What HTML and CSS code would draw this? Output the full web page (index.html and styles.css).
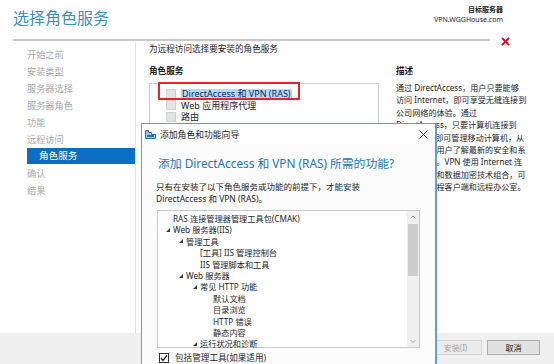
FILE: index.html
```html
<!DOCTYPE html>
<html lang="zh-CN">
<head>
  <meta charset="UTF-8">
  <title>添加角色和功能向导</title>
  <link rel="stylesheet" href="styles.css">
</head>
<body>

<div class="wizard">
  <div class="head">
    <h1>选择角色服务</h1>
    <div class="target">
      <b>目标服务器</b>
      <span>VPN.WGGHouse.com</span>
    </div>
  </div>

  <div class="rule-row">
    <div class="rule"></div>
    <svg class="red-x" width="9" height="9" viewBox="0 0 9 9">
      <path d="M1 1 L8 8 M8 1 L1 8" stroke="#e81123" stroke-width="2"/>
    </svg>
  </div>

  <div class="main">
    <nav class="steps">
      <div class="step">开始之前</div>
      <div class="step">安装类型</div>
      <div class="step">服务器选择</div>
      <div class="step">服务器角色</div>
      <div class="step">功能</div>
      <div class="step">远程访问</div>
      <div class="step current">角色服务</div>
      <div class="step">确认</div>
      <div class="step">结果</div>
    </nav>

    <section class="content">
      <p class="intro">为远程访问选择要安装的角色服务</p>
      <div class="cols">
        <div class="roles">
          <h3>角色服务</h3>
          <div class="role-list">
            <div class="role marked"><span class="box"></span><span class="sel">DirectAccess 和 VPN (RAS)</span></div>
            <div class="role"><span class="box"></span>Web 应用程序代理</div>
            <div class="role"><span class="box"></span>路由</div>
          </div>
        </div>
        <div class="desc">
          <h3>描述</h3>
          <p>
            通过 DirectAccess，用户只要能够<br>
            访问 Internet，即可享受无缝连接到<br>
            公司网络的体验。通过<br>
            DirectAccess，只要计算机连接到<br>
            Internet，即可管理移动计算机，从<br>
            而使得移动用户了解最新的安全和系<br>
            统更新策略。VPN 使用 Internet 连<br>
            接以及隧道和数据加密技术组合，可<br>
            以便连接远程客户端和远程办公室。
          </p>
        </div>
      </div>
    </section>
  </div>

  <div class="foot">
    <button class="btn" disabled>安装(I)</button>
    <button class="btn">取消</button>
  </div>
</div>

<div class="dialog">
  <div class="dlg-title">
    <svg class="dlg-icon" width="11" height="10" viewBox="0 0 11 10">
      <path d="M0.5 9.5 V1.5 H3.5 V3.5 H6.5 V5.5 H10.5 V9.5 Z" fill="#9cc7ea" stroke="#2c6fb5"/>
      <rect x="2" y="6" width="7" height="2" fill="#2c6fb5"/>
    </svg>
    <span class="dlg-name">添加角色和功能向导</span>
    <svg class="dlg-close" width="9" height="9" viewBox="0 0 9 9">
      <path d="M0.5 0.5 L8.5 8.5 M8.5 0.5 L0.5 8.5" stroke="#333" stroke-width="1"/>
    </svg>
  </div>

  <div class="dlg-body">
    <h2>添加 DirectAccess 和 VPN (RAS) 所需的功能?</h2>
    <p class="dlg-text">只有在安装了以下角色服务或功能的前提下，才能安装<br>DirectAccess 和 VPN (RAS)。</p>

    <div class="tree">
      <div class="nodes">
        <div class="node lv0"><i class="slot"></i>RAS 连接管理器管理工具包(CMAK)</div>
        <div class="node lv0"><i class="slot tg"></i>Web 服务器(IIS)</div>
        <div class="node lv1"><i class="slot tg"></i>管理工具</div>
        <div class="node lv2"><i class="slot"></i>[工具] IIS 管理控制台</div>
        <div class="node lv2"><i class="slot"></i>IIS 管理脚本和工具</div>
        <div class="node lv1"><i class="slot tg"></i>Web 服务器</div>
        <div class="node lv2"><i class="slot tg"></i>常见 HTTP 功能</div>
        <div class="node lv3"><i class="slot"></i>默认文档</div>
        <div class="node lv3"><i class="slot"></i>目录浏览</div>
        <div class="node lv3"><i class="slot"></i>HTTP 错误</div>
        <div class="node lv3"><i class="slot"></i>静态内容</div>
        <div class="node lv2"><i class="slot tg"></i>运行状况和诊断</div>
      </div>
      <div class="scroll">
        <svg class="arrow" width="10" height="12" viewBox="0 0 10 12">
          <path d="M2.5 7.5 L5 5 L7.5 7.5" fill="none" stroke="#a6a6a6"/>
        </svg>
        <div class="track"><div class="thumb"></div></div>
        <svg class="arrow" width="10" height="12" viewBox="0 0 10 12">
          <path d="M2.5 5 L5 7.5 L7.5 5" fill="none" stroke="#a6a6a6"/>
        </svg>
      </div>
    </div>

    <label class="check">
      <svg width="10" height="10" viewBox="0 0 10 10">
        <rect x="0.5" y="0.5" width="9" height="9" fill="#fff" stroke="#333"/>
        <path d="M2 5 L4 7.5 L8 2.5" fill="none" stroke="#222" stroke-width="1.3"/>
      </svg>
      包括管理工具(如果适用)
    </label>
  </div>
</div>

</body>
</html>
```

FILE: styles.css
```css
body {
  margin: 0;
  width: 554px;
  height: 364px;
  overflow: hidden;
  background-color: #fff;
  font-family: "Noto Sans", "Noto Sans CJK SC", sans-serif;
  color: #1e1e1e;
  position: relative;
}

.wizard {
  display: flex;
  flex-direction: column;
  height: 364px;
}

.head {
  height: 37px;
  display: flex;
  justify-content: space-between;
  padding: 0 51px 0 13px;
}

.head h1 {
  margin: 8px 0 0;
  font-size: 16px;
  font-weight: normal;
  line-height: 20px;
  color: #3a8fc0;
}

.target {
  display: flex;
  flex-direction: column;
  align-items: flex-end;
  margin-top: 5px;
  font-size: 7px;
  line-height: 10px;
}

.target b {
  font-size: 7px;
}

.rule-row {
  height: 6px;
  display: flex;
  align-items: center;
  padding-left: 13px;
}

.rule {
  width: 477px;
  height: 2px;
  background-color: #c9c9c9;
}

.red-x {
  margin-left: 11px;
  margin-top: 2px;
}

.main {
  height: 290px;
  display: flex;
  overflow: hidden;
}

.steps {
  width: 108px;
  padding: 3px 0 0 27px;
  border-right: 1px solid #e0e0e0;
  margin-right: 1px;
  font-size: 9.2px;
  color: #a8a8a8;
}

.step {
  height: 17px;
  line-height: 17px;
}

.step.current {
  background-color: #0a6fc2;
  color: #fff;
  padding-left: 12px;
  height: 16px;
  line-height: 16px;
  margin-bottom: 1px;
  font-size: 9.6px;
}

.content {
  flex: 1;
  padding-left: 12px;
}

.intro {
  margin: 0;
  font-size: 8.6px;
  line-height: 12px;
}

.cols {
  display: flex;
  margin-top: 10px;
}

.cols h3 {
  margin: 0;
  font-size: 8.6px;
  line-height: 12px;
}

.roles {
  width: 230px;
}

.role-list {
  margin-top: 6px;
  height: 250px;
  border: 1px solid #cfcfcf;
  padding-top: 4px;
  box-sizing: border-box;
}

.role {
  display: flex;
  align-items: center;
  height: 11.5px;
  font-size: 9px;
  padding-left: 16px;
}

.role .box {
  width: 8px;
  height: 8px;
  background-color: #e3e3e3;
  border: 1px solid #d0d0d0;
  margin-right: 5px;
}

.sel {
  background-color: #b5d8f7;
  color: #0b2c5a;
  padding: 0 1px;
  line-height: 10px;
}

.marked {
  position: relative;
}

.marked::after {
  content: "";
  position: absolute;
  left: 8px;
  top: -6px;
  width: 138px;
  height: 14px;
  border: 2px solid #e3262a;
}

.desc {
  margin-left: 17px;
  width: 140px;
}

.desc p {
  margin: 5px 0 0;
  font-size: 8.1px;
  line-height: 12.4px;
  white-space: nowrap;
}

.foot {
  height: 31px;
  background-color: #f0f0f0;
  display: flex;
  justify-content: flex-end;
  align-items: flex-start;
  gap: 5px;
  padding: 7px 14px 0 0;
  box-sizing: border-box;
}

.btn {
  width: 53px;
  height: 15px;
  padding: 0;
  font-family: inherit;
  font-size: 8px;
  background-color: #e1e1e1;
  border: 1px solid #adadad;
  color: #111;
}

.btn:disabled {
  background-color: #ececec;
  border-color: #d4d4d4;
  color: #a3a3a3;
}

/* dialog window laid over the wizard */
.dialog {
  position: absolute;
  left: 141px;
  top: 123px;
  width: 293px;
  height: 240px;
  background-color: #fff;
  border: 1px solid #5d9fdc;
  border-right-width: 2px;
  border-bottom: none;
  overflow: hidden;
}

.dlg-title {
  height: 20px;
  display: flex;
  align-items: center;
  padding: 0 7px 0 3px;
  font-size: 8.8px;
}

.dlg-icon {
  margin-right: 4px;
}

.dlg-name {
  flex: 1;
}

.dlg-body {
  padding: 1px 14px 0 15px;
  background-color: #fcfcfc;
  height: 219px;
}

.dlg-body h2 {
  margin: 11px 0 0 1px;
  font-size: 11.8px;
  font-weight: normal;
  line-height: 15px;
  color: #2178b3;
}

.dlg-text {
  margin: 10px 0 0 -1px;
  font-size: 8.5px;
  line-height: 12px;
}

.tree {
  margin-top: 5px;
  width: 263px;
  height: 138px;
  border: 1px solid #c8c8c8;
  box-sizing: border-box;
  background-color: #fff;
  display: flex;
}

.nodes {
  flex: 1;
  padding-top: 2px;
  font-size: 8.2px;
}

.node {
  height: 11.4px;
  line-height: 11.4px;
  display: flex;
  align-items: center;
}

.lv0 { padding-left: 7px; }
.lv1 { padding-left: 20px; }
.lv2 { padding-left: 34px; }
.lv3 { padding-left: 47px; }

.slot {
  width: 8px;
  height: 8px;
  display: flex;
  align-items: center;
}

.tg::before {
  content: "";
  border-left: 4px solid transparent;
  border-bottom: 4px solid #3c3c3c;
  margin-left: 1px;
}

.scroll {
  width: 12px;
  background-color: #f0f0f0;
  display: flex;
  flex-direction: column;
  align-items: center;
}

.arrow {
  flex: none;
}

.track {
  flex: 1;
  width: 10px;
}

.thumb {
  margin-top: 1px;
  height: 52px;
  background-color: #cdcdcd;
}

.check {
  display: flex;
  align-items: center;
  gap: 6px;
  height: 11px;
  margin: 4px 0 0 2px;
  font-size: 8.6px;
}
```
